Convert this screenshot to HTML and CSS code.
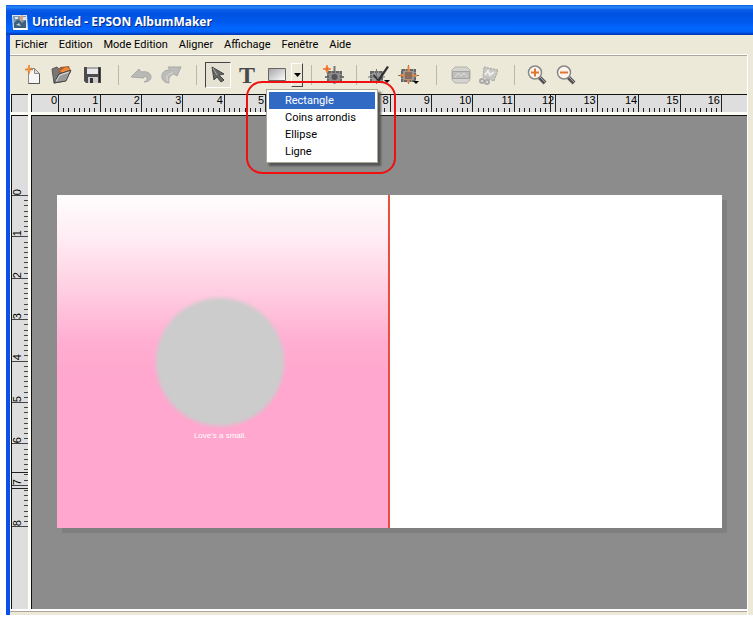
FILE: index.html
```html
<!DOCTYPE html>
<html lang="fr">
<head>
<meta charset="utf-8">
<title>Untitled - EPSON AlbumMaker</title>
<link rel="stylesheet" href="styles.css">
</head>
<body>
<div class="window">
  <header class="titlebar">
    <svg class="app-icon" width="17" height="17" viewBox="0 0 17 17" aria-hidden="true">
      <path d="M0 1h15l1 15H1z" fill="#dfe9f2"/>
      <path d="M1 2h13v11H2z" fill="#7e98ae"/>
      <path d="M2 9l4-4 4 4 4-3v8H2z" fill="#3f607c"/>
      <path d="M3 3h3v2H3zM11 3h3v3h-3z" fill="#d9e5ee"/>
      <path d="M8 2l3-1v5l-3 1z" fill="#e3a078"/>
      <path d="M2 14h13v2H2z" fill="#fff"/>
      <path d="M4 11l3-2 2 3z" fill="#b9cddb"/>
    </svg>
    <h1>Untitled - EPSON AlbumMaker</h1>
  </header>

  <div class="frame">
    <nav class="menubar">
      <button>Fichier</button>
      <button>Edition</button>
      <button>Mode Edition</button>
      <button>Aligner</button>
      <button>Affichage</button>
      <button>Fenêtre</button>
      <button>Aide</button>
    </nav>

    <div class="toolbar" role="toolbar">
      <button aria-label="Nouveau">
        <svg width="18" height="20" viewBox="0 0 18 20"><path d="M4.500 3.500h6l5 5v10h-11z" fill="#f6f6f6" stroke="#888"/><path d="M10.500 3.500v5h5z" fill="#ddd" stroke="#888"/><path d="M15.500 9v9.500h-11" fill="none" stroke="#555"/><path d="M5 0v9M1 4.500h8" stroke="#e87a20" stroke-width="1.500"/><path d="M3 2.500l4 4M7 2.500l-4 4" stroke="#f0a060"/></svg>
      </button>
      <button aria-label="Ouvrir">
        <svg width="22" height="20" viewBox="0 0 22 20"><path d="M2 4l5-2 2 2 4-1 2 13-11 2z" fill="#777" stroke="#555"/><path d="M8 8l2-6 9-1 2 6-5 6z" fill="#a4603a"/><path d="M10 6l6-4 4 2-4 6z" fill="#f38a32"/><path d="M4 18L9 9l12-4-5 11z" fill="#999" stroke="#444"/><path d="M6 16l4-6 9-3" fill="none" stroke="#ddd"/></svg>
      </button>
      <button aria-label="Enregistrer">
        <svg width="20" height="18" viewBox="0 0 20 18"><path d="M2 1h17v16H4l-2-2z" fill="#4c4c4c"/><path d="M5 1h11v7H5z" fill="#e8e8e8"/><path d="M5 1h11v2H5z" fill="#aaa"/><path d="M6 11h10v6H6z" fill="#ccc"/><path d="M8 12h3v5H8z" fill="#333"/><path d="M17.500 2v14" stroke="#222"/></svg>
      </button>
      <span class="sep"></span>
      <button aria-label="Annuler">
        <svg width="22" height="18" viewBox="0 0 22 18"><path d="M1 11l8-8 2 3c6-1 10 1 10 5 0 3-3 5-7 5 4-2 4-5 0-6l0 2z" fill="#b9b9b5" stroke="#a9a9a5"/></svg>
      </button>
      <button aria-label="Rétablir">
        <svg width="22" height="20" viewBox="0 0 22 20"><path d="M21 2l-4 9-3-2c-4 1-6 4-5 9-5 0-8-4-7-8 1-4 4-5 8-5L8 2z" fill="#bcbcb8" stroke="#a9a9a5"/><path d="M8 16c-3-4 0-7 5-8" fill="none" stroke="#ddd"/></svg>
      </button>
      <span class="sep"></span>
      <button class="pressed" aria-label="Sélection">
        <svg width="16" height="17" viewBox="0 0 16 17"><path d="M2 1l12 7-5 1 5 5-3 2-4-5-3 3z" fill="#666" stroke="#444"/><path d="M3 2l4 7" stroke="#aaa"/></svg>
      </button>
      <button class="text-tool" aria-label="Texte">T</button>
      <button aria-label="Rectangle">
        <svg width="20" height="15" viewBox="0 0 20 15"><defs><linearGradient id="metal" x2="1" y2="1"><stop stop-color="#a4a4a4"/><stop offset="1" stop-color="#fff"/></linearGradient></defs><path d="M1.500 1.500h17v12h-17z" fill="url(#metal)" stroke="#666"/></svg>
      </button>
      <button class="drop" aria-label="Choisir une forme" aria-expanded="true">
        <svg width="7" height="4" viewBox="0 0 7 4"><path d="M0 0h7L3.500 4z"/></svg>
      </button>
      <span class="sep"></span>
      <button aria-label="Ajouter un cadre">
        <svg width="22" height="20" viewBox="0 0 22 20"><path d="M12.500 1v18M3 12h19" stroke="#777" stroke-width="2"/><path d="M5 6h15v12H5z" fill="#8c8c8c"/><path d="M6 7h13v10H6z" fill="none" stroke="#666" stroke-width="2" stroke-dasharray="3 1"/><circle cx="12.500" cy="12" r="3" fill="#555"/><path d="M5 0l1 3 3 1-3 1-1 3-1-3-3-1 3-1z" fill="#ec6a1c" stroke="#ee8744"/></svg>
      </button>
      <span class="sep"></span>
      <button aria-label="Modifier le cadre">
        <svg width="22" height="20" viewBox="0 0 22 20"><path d="M2 6h13v12H2z" fill="#999"/><path d="M3 7h11v10H3z" fill="none" stroke="#666" stroke-width="2" stroke-dasharray="3 1"/><path d="M8.500 4v15M0 12h17" stroke="#777"/><path d="M6 9l4 5L19 1l2 1-10 15-6-6z" fill="#333"/><path d="M16 15h6l-3 3z"/></svg>
      </button>
      <button aria-label="Ajuster le cadre">
        <svg width="22" height="20" viewBox="0 0 22 20"><path d="M3 4h15v13H3z" fill="#999"/><path d="M4 5h13v11H4z" fill="none" stroke="#666" stroke-width="2" stroke-dasharray="3 1"/><path d="M10.500 0v19M0 10.500h21" stroke="#8c6a50"/><path d="M10.500 1v6M10.500 14v4M2 10.500h5M14 10.500h5" stroke="#e8843a" stroke-width="2"/><path d="M7 7h7v7H7z" fill="#8a6d5a"/><path d="M15 16h6l-3 3z"/></svg>
      </button>
      <span class="sep"></span>
      <button aria-label="Image" disabled>
        <svg width="20" height="18" viewBox="0 0 20 18"><path d="M4 1h12l3 3v10l-3 3H4l-3-3V4z" fill="#d4d3cd" stroke="#b4b4b0"/><path d="M1.500 5.500h17v7h-17z" fill="#bfbfbb" stroke="#a4a4a0"/><path d="M4 11l3-4 3 3 3-3 3 4" fill="none" stroke="#ddd"/></svg>
      </button>
      <button aria-label="Rotation" disabled>
        <svg width="20" height="20" viewBox="0 0 20 20"><path d="M5 2l14 3-4 11-11-4z" fill="#c8c8c3" stroke="#a4a4a0" stroke-dasharray="2 1"/><path d="M6 10l3-4 2 4 4-3" fill="none" stroke="#eee" stroke-width="2"/><circle cx="3" cy="16" r="2" fill="none" stroke="#aaa" stroke-width="2"/><circle cx="8" cy="17" r="2" fill="none" stroke="#aaa" stroke-width="2"/></svg>
      </button>
      <span class="sep"></span>
      <button aria-label="Zoom avant">
        <svg width="20" height="20" viewBox="0 0 20 20"><path d="M12 12l6 6" stroke="#555" stroke-width="4"/><path d="M12 11l6 6" stroke="#aaa"/><circle cx="8" cy="7.500" r="6.500" fill="#fdf5ee" stroke="#888" stroke-width="1.500"/><path d="M4 7.500h8M8 3.500v8" stroke="#df762e" stroke-width="2"/></svg>
      </button>
      <button aria-label="Zoom arrière">
        <svg width="20" height="20" viewBox="0 0 20 20"><path d="M12 12l6 6" stroke="#555" stroke-width="4"/><path d="M12 11l6 6" stroke="#aaa"/><circle cx="8" cy="7.500" r="6.500" fill="#fdf5ee" stroke="#888" stroke-width="1.500"/><path d="M4 7.500h8" stroke="#df762e" stroke-width="2"/></svg>
      </button>

      <div class="popup" role="menu">
        <button class="selected" role="menuitem">Rectangle</button>
        <button role="menuitem">Coins arrondis</button>
        <button role="menuitem">Ellipse</button>
        <button role="menuitem">Ligne</button>
      </div>
      <div class="callout"></div>
    </div>

    <main class="workspace">
      <div class="corner"></div>
      <div class="ruler across" data-units="16" data-covered="6 7"><span class="cursor cursor-x"></span></div>
      <div class="ruler down" data-units="8" data-covered=""><span class="cursor cursor-y1"></span><span class="cursor cursor-y2"></span></div>
      <div class="canvas">
        <div class="spread">
          <section class="leaf left">
            <div class="photo"></div>
            <p>Love's a small.</p>
          </section>
          <section class="leaf"></section>
        </div>
      </div>
    </main>
    <footer class="status"></footer>
  </div>
</div>
<script src="rulers.js"></script>
</body>
</html>
```
FILE: styles.css
```css
* { box-sizing: border-box; }

body {
  margin: 0;
  background: #fff;
  color: #000;
  font: 11px/17px Roboto, "Liberation Sans", sans-serif;
}

button {
  display: flex;
  align-items: center;
  justify-content: center;
  margin: 0;
  padding: 0;
  border: 0;
  background: none;
  color: inherit;
  font: inherit;
  white-space: nowrap;
}

svg { display: block; flex: none; }

.window {
  display: flex;
  flex-direction: column;
  height: calc(100vh - 7px);
  margin: 5px 0 2px 6px;
}

.titlebar {
  display: flex;
  align-items: center;
  gap: 3px;
  height: 30px;
  padding: 4px 6px 0;
  background: linear-gradient(#0a5ad8, #2b86fa 2px, #0a5be8 5px, #0053e0 9px, #0058ec 16px, #0266ff 24px, #0260f5 27px, #003cc0 29px, #0036b4);
}

.titlebar h1 {
  margin: 0;
  color: #fff;
  font: bold 12px/18px "Noto Sans", sans-serif;
  text-shadow: 1px 1px #0a2a80;
}

.frame {
  display: flex;
  flex: 1;
  flex-direction: column;
  min-height: 0;
  border-left: 4px solid #0b50ea;
  background: #ece9d8;
}

.menubar {
  display: flex;
  gap: 11px;
  height: 19px;
  padding-left: 5px;
}

.toolbar {
  position: relative;
  display: grid;
  grid-template-columns: 28px 28px 34px 18px 28px 32px 18px 26px 32px 28px 12px 16px 28px 18px 28px 32px 22px 28px 28px 22px 24px 34px;
  align-items: center;
  height: 40px;
  margin-right: 5px;
  padding-left: 9px;
  border-top: 1px solid #fff;
  border-right: 1px solid #fff;
  box-shadow: inset 0 1px #aca899;
}

.sep {
  justify-self: center;
  width: 1px;
  height: 20px;
  background: #bcb8a9;
}

.pressed {
  height: 26px;
  border: 1px solid;
  border-color: #444 #fff #fff #444;
  background: #e5e2d3;
}

.text-tool {
  color: #4a4a4a;
  font: bold 24px/26px "Liberation Serif", serif;
}

.drop {
  height: 24px;
  border: 1px solid;
  border-color: #fff #444 #444 #fff;
}

.popup {
  position: absolute;
  z-index: 2;
  top: 34px;
  left: 256px;
  width: 112px;
  padding: 2px;
  border: 1px solid #aca899;
  background: #fff;
  box-shadow: 3px 3px 2px #555;
}

.popup button {
  justify-content: flex-start;
  width: 100%;
  height: 17px;
  padding-left: 16px;
}

.popup .selected {
  background: #316ac5;
  color: #fff;
}

.callout {
  position: absolute;
  z-index: 3;
  top: 26px;
  left: 236px;
  width: 150px;
  height: 93px;
  border: 2px solid #f01010;
  border-radius: 16px;
  pointer-events: none;
}

.workspace {
  display: grid;
  flex: 1;
  grid-template: 18px 1fr / 17px 1fr;
  gap: 3px;
  min-height: 0;
  margin-right: 5px;
  padding-left: 1px;
  border-right: 1px solid #fff;
  background: #fffef6;
}

.corner, .ruler, .canvas {
  border: 0 solid #111;
  border-top-width: 1px;
  border-left-width: 1px;
}

.corner, .ruler {
  background: #dedede;
}

.ruler {
  position: relative;
  display: flex;
  font: 11px/11px "Liberation Sans", sans-serif;
}

.across { padding-right: 25px; }

.unit {
  position: relative;
  display: flex;
  flex: 1;
  align-items: flex-end;
  min-width: 0;
  min-height: 0;
}

.across .unit:first-of-type { flex: 0 0 27px; }

.unit b {
  position: absolute;
  top: 0;
  right: 2px;
  font-weight: normal;
}

.unit .covered { visibility: hidden; }

.tick { flex: 1; }

.across .tick {
  height: 4px;
  border-right: 1px solid #222;
}

.across .tick:last-child { height: 100%; }

.down {
  display: grid;
  grid-template-rows: 80px repeat(8, minmax(0, 332fr)) minmax(0, 656fr);
}

.down .unit { flex-direction: column; }

.down .tick {
  width: 4px;
  border-bottom: 1px solid #444;
}

.down .tick:last-child { width: 100%; }

.down b {
  top: auto;
  right: auto;
  bottom: 1px;
  left: 0;
  transform: rotate(180deg);
  writing-mode: vertical-rl;
}

.cursor {
  position: absolute;
  background: #222;
}

.cursor-x { top: 0; left: 518px; width: 1px; height: 100%; }
.cursor-y1 { top: 356px; left: 0; width: 100%; height: 1px; }
.cursor-y2 { top: 372px; left: 0; width: 100%; height: 1px; }

.canvas {
  min-width: 0;
  padding: 79px 25px 0;
  background: #8c8c8c;
}

.spread {
  display: grid;
  grid-template-columns: 1fr 1fr;
  aspect-ratio: 2 / 1;
  background: #fff;
  box-shadow: 5px 5px #7f7f7f;
}

.leaf {
  display: flex;
  flex-direction: column;
  align-items: center;
}

.left {
  padding: 100px 4px 0 0;
  border-right: 2px solid #e8503c;
  background: linear-gradient(#fffdfd, #ffeef5 12%, #ffcfe2 28%, #ffaed2 44%, #ffa7ce 54%, #ffa7ce);
}

.photo {
  width: 134px;
  height: 134px;
  border-radius: 50%;
  background: radial-gradient(closest-side, #ccc 91%, rgba(204, 204, 204, 0));
}

.left p {
  margin: 1px 0 0;
  color: #fff;
  font: 8px/12px "Liberation Sans", sans-serif;
}

.status {
  height: 6px;
  margin-right: 5px;
  border-top: 2px solid #fff;
  border-right: 1px solid #fff;
  box-shadow: inset 0 1px #aca899;
}
```
FILE: rulers.js
```js
// Builds the inch units of each ruler: a label, seven eighth marks and a full mark.
// Labels listed in data-covered lie under the open menu and stay hidden.
document.querySelectorAll('.ruler').forEach(function (ruler) {
  var units = Number(ruler.dataset.units);
  var covered = ruler.dataset.covered.split(' ');
  var first = ruler.firstElementChild;
  for (var n = 0; n <= units; n++) {
    var unit = document.createElement('div');
    unit.className = 'unit';
    var label = document.createElement('b');
    label.textContent = n;
    if (covered.includes(String(n))) label.className = 'covered';
    unit.appendChild(label);
    for (var t = 0; t < (n ? 8 : 1); t++) {
      var tick = document.createElement('i');
      tick.className = 'tick';
      unit.appendChild(tick);
    }
    ruler.insertBefore(unit, first);
  }
});
```
